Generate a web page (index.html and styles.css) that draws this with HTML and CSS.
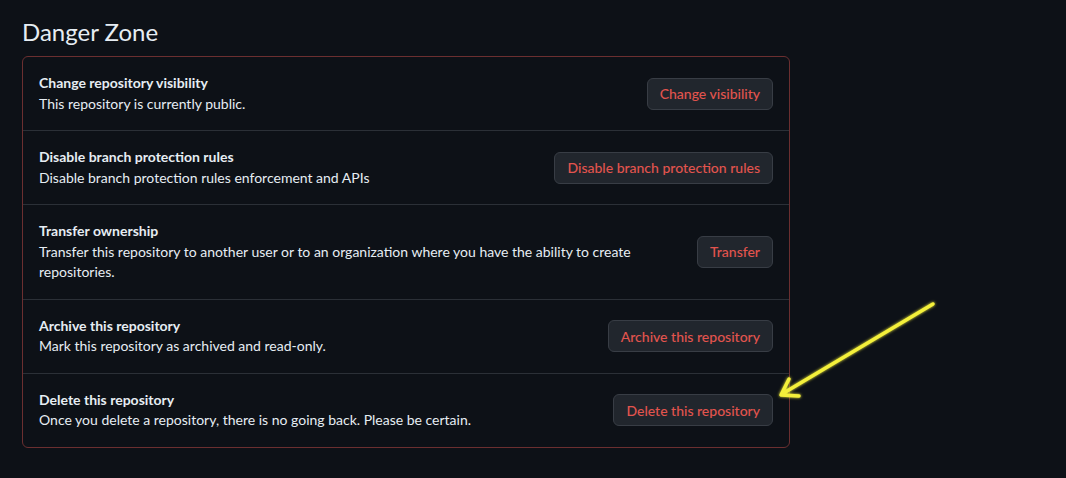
FILE: index.html
```html
<!DOCTYPE html>
<html>
<head>
<meta charset="utf-8">
<link rel="stylesheet" href="styles.css">
</head>
<body>
<div class="page">
  <h2 class="heading">Danger Zone</h2>
  <div class="zone">
    <div class="row">
      <div class="info">
        <div class="title">Change repository visibility</div>
        <div class="desc">This repository is currently public.</div>
      </div>
      <button class="btn">Change visibility</button>
    </div>
    <div class="row">
      <div class="info">
        <div class="title">Disable branch protection rules</div>
        <div class="desc">Disable branch protection rules enforcement and APIs</div>
      </div>
      <button class="btn">Disable branch protection rules</button>
    </div>
    <div class="row">
      <div class="info">
        <div class="title">Transfer ownership</div>
        <div class="desc">Transfer this repository to another user or to an organization where you have the ability to create repositories.</div>
      </div>
      <button class="btn">Transfer</button>
    </div>
    <div class="row">
      <div class="info">
        <div class="title">Archive this repository</div>
        <div class="desc">Mark this repository as archived and read-only.</div>
      </div>
      <button class="btn">Archive this repository</button>
    </div>
    <div class="row">
      <div class="info">
        <div class="title">Delete this repository</div>
        <div class="desc">Once you delete a repository, there is no going back. Please be certain.</div>
      </div>
      <button class="btn">Delete this repository</button>
    </div>
  </div>
</div>
<svg class="arrow" width="1066" height="478" viewBox="0 0 1066 478">
  <defs>
    <filter id="glow" x="-20%" y="-20%" width="140%" height="140%">
      <feGaussianBlur stdDeviation="1.5" result="b"/>
      <feMerge><feMergeNode in="b"/><feMergeNode in="SourceGraphic"/></feMerge>
    </filter>
  </defs>
  <g filter="url(#glow)" stroke="#f4f03a" stroke-width="3.5" stroke-linecap="round" stroke-linejoin="round" fill="none">
    <path d="M933 304 L782 394"/>
    <path d="M789 379 L781 395 L799 396"/>
  </g>
</svg>
</body>
</html>
```
FILE: styles.css
```css
html, body {
  margin: 0;
  padding: 0;
  background: #0d1117;
}
body {
  width: 1066px;
  height: 478px;
  overflow: hidden;
  font-family: "Lato", "Noto Sans", sans-serif;
  color: #e6edf3;
}
.page {
  padding: 0 0 0 22px;
  width: 768px;
}
.heading {
  margin: 0;
  padding-top: 17px;
  height: 56px;
  box-sizing: border-box;
  font-size: 24px;
  font-weight: 400;
  line-height: 30px;
  color: #e6edf3;
}
.zone {
  border: 1px solid #6b2f30;
  border-radius: 6px;
}
.row {
  display: flex;
  align-items: center;
  gap: 16px;
  padding: 16px;
  border-top: 1px solid #2b3037;
}
.row:first-child {
  border-top: none;
}
.info {
  flex: 1;
  min-width: 0;
}
.title {
  font-size: 14px;
  font-weight: 700;
  line-height: 20.5px;
}
.desc {
  font-size: 14px;
  line-height: 20.5px;
}
.btn {
  height: 32px;
  padding: 0 12px;
  font-family: inherit;
  font-size: 14px;
  font-weight: 500;
  color: #e2544e;
  background: #21262d;
  border: 1px solid #383d45;
  border-radius: 6px;
  white-space: nowrap;
  flex: none;
}
.arrow {
  position: absolute;
  left: 0;
  top: 0;
  pointer-events: none;
}
```
